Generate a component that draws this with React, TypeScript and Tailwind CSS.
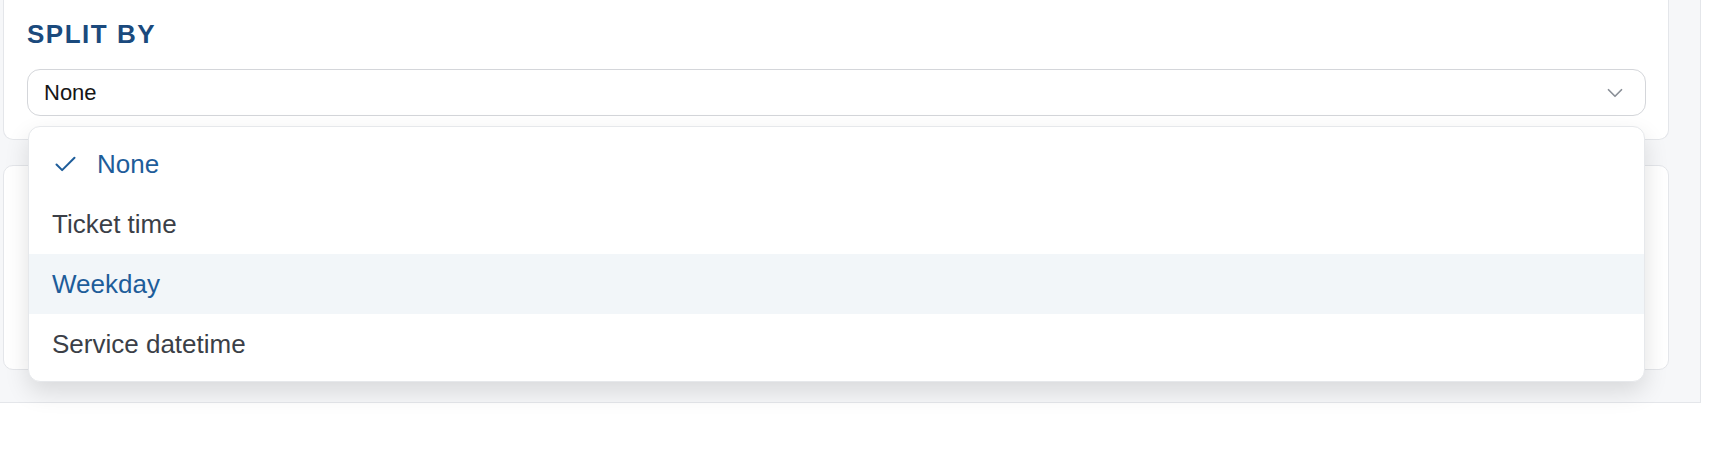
import { Check, ChevronDown } from 'lucide-react';

export default function App() {
  const options = [
    { label: 'None', selected: true },
    { label: 'Ticket time' },
    { label: 'Weekday', active: true },
    { label: 'Service datetime' },
  ];

  return (
    <div className="w-[1710px] h-[450px] bg-white overflow-hidden font-['Liberation_Sans',Arial,sans-serif]">
      {/* Panel area */}
      <div className="relative w-[1701px] h-[403px] bg-[#f6f7f9] border-r border-b border-[#e4e6ea] pl-[3px] pr-[31px] flex flex-col gap-[25px]">
        {/* Split by card */}
        <div className="bg-white border border-t-0 border-[#e4e6ea] rounded-b-[10px] pt-[18px] pb-[23px] pl-[23px] pr-[22px]">
          <h2 className="text-[26px] leading-[32px] font-bold tracking-[1.5px] text-[#1b4a7d]">SPLIT BY</h2>
          <button className="mt-[19px] w-full h-[47px] flex items-center justify-between border border-[#d4d6da] rounded-[13px] bg-white pl-[16px] pr-[17px]">
            <span className="text-[22px] text-[#161616]">None</span>
            <ChevronDown size={26} strokeWidth={1.6} className="text-[#8b9098]" />
          </button>
        </div>

        {/* Next card (covered by menu) */}
        <div className="h-[205px] bg-white border border-[#e4e6ea] rounded-[10px]"></div>

        {/* Dropdown menu */}
        <div className="absolute left-[28px] top-[126px] w-[1617px] bg-white border border-[#e6e8eb] rounded-[12px] py-[7px] shadow-[0_10px_24px_rgba(0,0,0,0.12)]">
          {options.map((opt, idx) => (
            <div
              key={idx}
              className={`h-[60px] flex items-center pl-[23px] text-[26px] ${
                opt.active ? 'bg-[#f2f6f9]' : ''
              } ${opt.selected || opt.active ? 'text-[#1e5d9a]' : 'text-[#3b3f47]'}`}
            >
              {opt.selected && <Check size={27} strokeWidth={1.8} className="mr-[18px] text-[#1e5d9a]" />}
              <span>{opt.label}</span>
            </div>
          ))}
        </div>
      </div>
    </div>
  );
}
